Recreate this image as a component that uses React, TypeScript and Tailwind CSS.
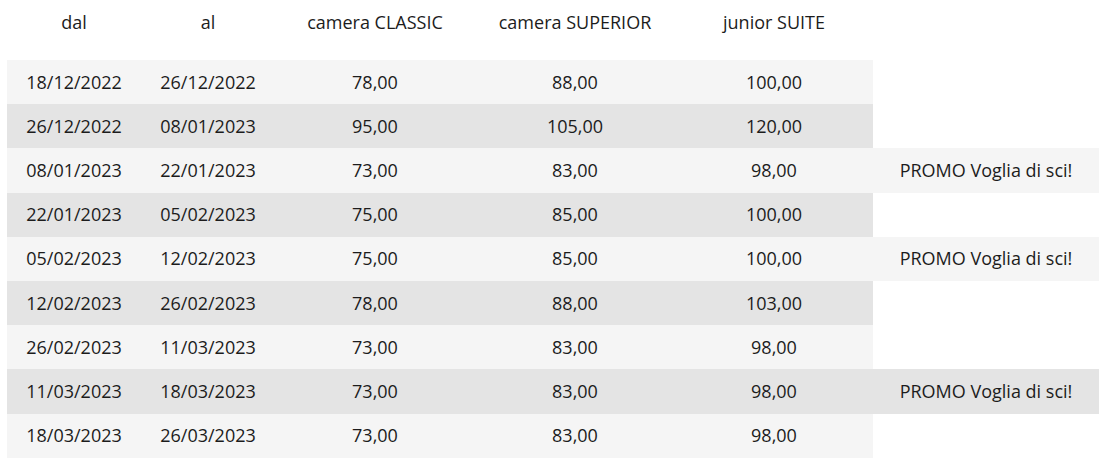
const HEADERS = ["dal", "al", "camera CLASSIC", "camera SUPERIOR", "junior SUITE"];

type Row = {
  from: string;
  to: string;
  classic: string;
  superior: string;
  suite: string;
  promo?: string;
};

const ROWS: Row[] = [
  { from: "18/12/2022", to: "26/12/2022", classic: "78,00", superior: "88,00", suite: "100,00" },
  { from: "26/12/2022", to: "08/01/2023", classic: "95,00", superior: "105,00", suite: "120,00" },
  { from: "08/01/2023", to: "22/01/2023", classic: "73,00", superior: "83,00", suite: "98,00", promo: "PROMO Voglia di sci!" },
  { from: "22/01/2023", to: "05/02/2023", classic: "75,00", superior: "85,00", suite: "100,00" },
  { from: "05/02/2023", to: "12/02/2023", classic: "75,00", superior: "85,00", suite: "100,00", promo: "PROMO Voglia di sci!" },
  { from: "12/02/2023", to: "26/02/2023", classic: "78,00", superior: "88,00", suite: "103,00" },
  { from: "26/02/2023", to: "11/03/2023", classic: "73,00", superior: "83,00", suite: "98,00" },
  { from: "11/03/2023", to: "18/03/2023", classic: "73,00", superior: "83,00", suite: "98,00", promo: "PROMO Voglia di sci!" },
  { from: "18/03/2023", to: "26/03/2023", classic: "73,00", superior: "83,00", suite: "98,00" },
];

const GRID = "grid grid-cols-[134px_134px_200px_200px_198px_226px]";

export default function App() {
  return (
    <div className="h-[468px] w-[1108px] overflow-hidden bg-white pl-[7px] font-['Open_Sans',sans-serif] text-[18px] text-[#1c1c1c]">
      <div className={`${GRID} h-[44px] items-center text-center`}>
        {HEADERS.map((h) => (
          <div key={h}>{h}</div>
        ))}
      </div>

      <div className="mt-4">
        {ROWS.map((row, i) => {
          const bg = i % 2 === 0 ? "bg-[#f5f5f5]" : "bg-[#e4e4e4]";
          const cells = [row.from, row.to, row.classic, row.superior, row.suite];
          return (
            <div key={row.from} className={`${GRID} h-[44.2px] text-center`}>
              {cells.map((c, j) => (
                <div key={j} className={`flex items-center justify-center ${bg}`}>
                  {c}
                </div>
              ))}
              {row.promo ? (
                <div className={`flex items-center justify-center ${bg}`}>{row.promo}</div>
              ) : (
                <div />
              )}
            </div>
          );
        })}
      </div>
    </div>
  );
}
